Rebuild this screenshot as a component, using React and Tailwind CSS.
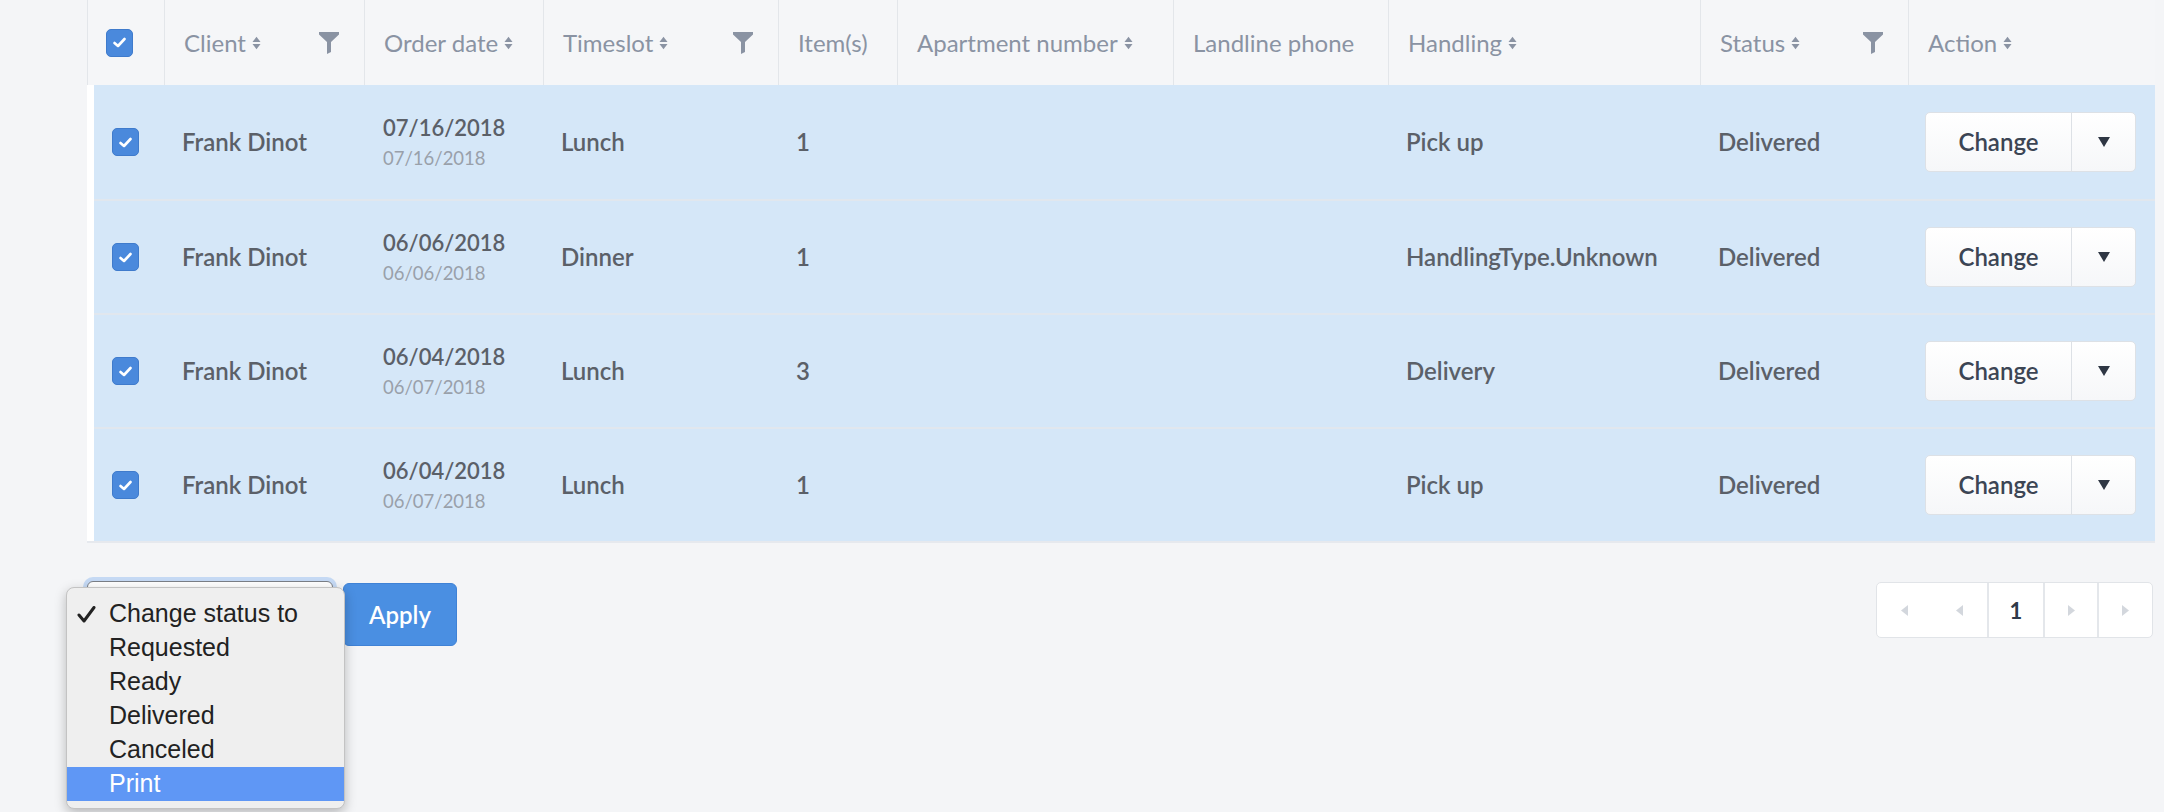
import React from "react";

const SortIcon = () => (
  <svg width="9" height="14" viewBox="0 0 9 14" className="shrink-0">
    <path d="M0.5 6 L4.5 0.8 L8.5 6 Z" fill="#8a93a3" />
    <path d="M0.5 8 L4.5 13.2 L8.5 8 Z" fill="#8a93a3" />
  </svg>
);

const FilterIcon = () => (
  <svg width="20" height="22" viewBox="0 0 20 22" className="shrink-0">
    <path d="M0 0 H20 V2.5 L12 10 V20 L8 22 V10 L0 2.5 Z" fill="#8a93a3" />
  </svg>
);

const Check = () => (
  <div className="w-[27px] h-[28px] rounded-[5px] bg-[#4a89dc] border border-[#3f7bcc] flex items-center justify-center">
    <svg width="13" height="11" viewBox="0 0 13 11">
      <path d="M1.5 6 L5 9 L11.5 2" fill="none" stroke="white" strokeWidth="2.6" strokeLinecap="round" strokeLinejoin="round" />
    </svg>
  </div>
);

const headers = [
  { label: "Client", sort: true, filter: true },
  { label: "Order date", sort: true },
  { label: "Timeslot", sort: true, filter: true },
  { label: "Item(s)" },
  { label: "Apartment number", sort: true },
  { label: "Landline phone" },
  { label: "Handling", sort: true },
  { label: "Status", sort: true, filter: true },
  { label: "Action", sort: true },
];

const rows = [
  { date: "07/16/2018", date2: "07/16/2018", slot: "Lunch", items: "1", handling: "Pick up" },
  { date: "06/06/2018", date2: "06/06/2018", slot: "Dinner", items: "1", handling: "HandlingType.Unknown" },
  { date: "06/04/2018", date2: "06/07/2018", slot: "Lunch", items: "3", handling: "Delivery" },
  { date: "06/04/2018", date2: "06/07/2018", slot: "Lunch", items: "1", handling: "Pick up" },
];

const Tri = ({ dir }) => (
  <svg width="7" height="11" viewBox="0 0 7 11">
    {dir === "left" ? (
      <path d="M7 0 L0 5.5 L7 11 Z" fill="#d3d7dd" />
    ) : (
      <path d="M0 0 L7 5.5 L0 11 Z" fill="#d3d7dd" />
    )}
  </svg>
);

export default function App() {
  return (
    <div className="w-[2164px] h-[812px] overflow-hidden bg-[#f4f5f7] font-['Lato',sans-serif] relative">
      {/* Table */}
      <div className="ml-[87px] w-[2068px]">
        <div className="grid grid-cols-[76px_200px_179px_235px_119px_276px_215px_312px_208px_248px] h-[85px] bg-[#f5f6f8] border-l border-[#e3e6ea]">
          <div className="flex items-center pl-[18px]">
            <Check />
          </div>
          {headers.map((h, i) => (
            <div
              key={i}
              className="flex items-center justify-between border-l border-[#e3e6ea] pl-[19px] pr-[25px] text-[24px] text-[#8a93a3]"
            >
              <div className="flex items-center gap-[6px] whitespace-nowrap">
                <span>{h.label}</span>
                {h.sort && <SortIcon />}
              </div>
              {h.filter && <FilterIcon />}
            </div>
          ))}
        </div>
        <div className="bg-white pl-[7px] border-b-2 border-[#e6e9ee]">
          {rows.map((r, i) => (
            <div
              key={i}
              className={`grid grid-cols-[69px_200px_179px_235px_119px_276px_215px_312px_208px_248px] h-[114px] bg-[#d5e7f8] text-[24px] text-[#5b6068] font-semibold ${i > 0 ? "border-t-2 border-[#e1e7ee]" : ""}`}
            >
              <div className="flex items-center pl-[18px]">
                <Check />
              </div>
              <div className="flex items-center pl-[19px] whitespace-nowrap">Frank Dinot</div>
              <div className="flex flex-col justify-center pl-[20px] leading-[30px] pt-[2px]">
                <span className="text-[22px]">{r.date}</span>
                <span className="text-[18.5px] font-normal text-[#99a0aa]">{r.date2}</span>
              </div>
              <div className="flex items-center pl-[19px]">{r.slot}</div>
              <div className="flex items-center pl-[19px]">{r.items}</div>
              <div />
              <div />
              <div className="flex items-center pl-[19px] whitespace-nowrap">{r.handling}</div>
              <div className="flex items-center pl-[19px]">Delivered</div>
              <div className="flex items-center pl-[18px]">
                <div className="flex h-[60px] rounded-[5px] border border-[#dde1e6] bg-gradient-to-b from-white to-[#f6f7f9] text-[#3c4554]">
                  <div className="w-[146px] flex items-center justify-center border-r border-[#dde1e6]">Change</div>
                  <div className="w-[63px] flex items-center justify-center">
                    <svg width="12" height="10" viewBox="0 0 12 10">
                      <path d="M0 0 H12 L6 10 Z" fill="#2f3744" />
                    </svg>
                  </div>
                </div>
              </div>
            </div>
          ))}
        </div>
      </div>

      {/* Footer */}
      <div className="flex justify-between items-start mt-[38px] ml-[87px] w-[2066px]">
        <div className="flex items-start gap-[10px]">
          <div className="relative w-[246px] h-[68px] rounded-[6px] border border-[#7b7f86] bg-white shadow-[0_0_0_4px_rgba(140,185,240,0.45)]">
            {/* native popup menu overlay */}
            <div className="absolute left-[-22px] top-[5px] w-[279px] h-[222px] rounded-[8px] bg-[#efefef] border border-[#c3c3c3] shadow-[0_4px_12px_rgba(0,0,0,0.25)] pt-[9px] font-['Liberation_Sans',sans-serif] text-[25px] text-[#222] z-10">
              {["Change status to", "Requested", "Ready", "Delivered", "Canceled", "Print"].map((t, i) => (
                <div
                  key={t}
                  className={`h-[34px] flex items-center relative pl-[42px] ${t === "Print" ? "bg-[#5f97f5] text-white" : ""}`}
                >
                  {i === 0 && (
                    <svg width="19" height="17" viewBox="0 0 19 17" className="absolute left-[10px] top-[9px]">
                      <path d="M2 9 L7 15 L17 1.5" fill="none" stroke="#222" strokeWidth="3" strokeLinecap="round" strokeLinejoin="round" />
                    </svg>
                  )}
                  {t}
                </div>
              ))}
            </div>
          </div>
          <button className="mt-[2px] w-[114px] h-[63px] rounded-[6px] bg-[#4a8fe2] border border-[#3f82d6] text-white text-[24px] font-semibold">
            Apply
          </button>
        </div>
        <div className="mt-[1px] flex h-[56px] rounded-[5px] border border-[#e1e4e8] bg-white overflow-hidden">
          <div className="w-[55px] flex items-center justify-center"><Tri dir="left" /></div>
          <div className="w-[55px] flex items-center justify-center"><Tri dir="left" /></div>
          <div className="w-[56px] flex items-center justify-center border-l-2 border-[#e4e7eb] text-[22px] font-bold text-[#2f3a4a]">1</div>
          <div className="w-[54px] flex items-center justify-center border-l-2 border-[#e4e7eb]"><Tri dir="right" /></div>
          <div className="w-[55px] flex items-center justify-center border-l-2 border-[#e4e7eb]"><Tri dir="right" /></div>
        </div>
      </div>
    </div>
  );
}
